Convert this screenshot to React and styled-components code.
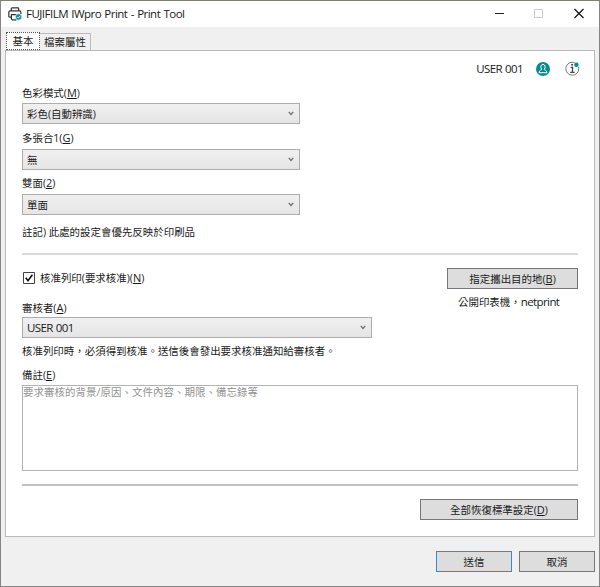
import React from 'react';
import styled, { createGlobalStyle } from 'styled-components';

function Combo({ value, width }) {
  return (
    <Select $width={width}>
      <Text>{value}</Text>
      <Chevron viewBox="0 0 6 5">
        <path d="M0.8 0.8 L3 3.6 L5.2 0.8" />
      </Chevron>
    </Select>
  );
}

function App() {
  return (
    <Window>
      <GlobalStyle />
      <TitleBar>
        <PrinterIcon viewBox="0 0 14 14">
          <path d="M3.3 4V1.7q0-.8.8-.8h5.8q.8 0 .8.8V4M3 10.2H1.8q-1 0-1-1V5.3q0-1.4 1.4-1.4h9.3q1.4 0 1.4 1.4V7M3.4 12V7.6h6M3.4 11.6q0 1.2 1 1.2h4" />
          <circle cx="10.6" cy="9.9" r="3.2" />
          <path className="check" d="M9.1 9.9l1.1 1.1 2-2.1" />
        </PrinterIcon>
        <Title>FUJIFILM IWpro Print - Print Tool</Title>
        <WindowIcons viewBox="0 0 90 12">
          <path d="M0 5.5h9" stroke="#222" />
          <path d="M39.5 1.5h8v8h-8z" stroke="#ccc" />
          <path d="M79.5 1l9 9M88.5 1l-9 9" stroke="#111" strokeWidth="1.2" />
        </WindowIcons>
      </TitleBar>

      <Tabs>
        <Tab $active><Text>基本</Text></Tab>
        <Tab><Text>檔案屬性</Text></Tab>
      </Tabs>

      <Panel>
        <UserRow>
          <Latin>USER 001</Latin>
          <UserIcon viewBox="0 0 14 14">
            <circle cx="7" cy="7" r="7" fill="#088a92" />
            <path d="M5.7 7.3C4.2 5.6 4.7 2.4 7 2.4s2.8 3.2 1.3 4.9c.2 1 2.6.8 2.7 3.4H3c.1-2.6 2.5-2.4 2.7-3.4z" fill="none" stroke="#fff" />
          </UserIcon>
          <InfoIcon viewBox="0 0 15 15">
            <circle cx="7.3" cy="7.7" r="6.5" fill="none" stroke="#777" />
            <path d="M5.6 6.3h1.9v5M5.2 11.3h4.4" fill="none" stroke="#444" strokeWidth="1.3" />
            <circle cx="7.1" cy="3.7" r="1" fill="#444" />
            <circle cx="11.4" cy="3.7" r="2.8" fill="#fff" />
            <circle cx="11.4" cy="3.7" r="2.2" fill="#088a92" />
          </InfoIcon>
        </UserRow>

        <Label $h={23} $line={25}>色彩模式(<u>M</u>)</Label>
        <Combo value="彩色(自動辨識)" width={278} />
        <Label $line={27}>多張合1(<u>G</u>)</Label>
        <Combo value="無" width={278} />
        <Label $h={24} $line={26}>雙面(<u>2</u>)</Label>
        <Combo value="單面" width={278} />
        <Label $h={38} $line={35}>註記) 此處的設定會優先反映於印刷品</Label>
        <Divider $color="#d8d8d8" />

        <ApproveRow>
          <CheckLabel>
            <CheckBox viewBox="0 0 12 12">
              <path d="M.5.5h11v11H.5z" fill="#fff" stroke="#444" />
              <path d="M2.7 5.8l2.3 2.9 4.4-6" fill="none" stroke="#111" strokeWidth="1.6" />
            </CheckBox>
            <Text>核准列印(要求核准)(<u>N</u>)</Text>
          </CheckLabel>
          <Destination>
            <Button $width={131}>指定攜出目的地(<u>B</u>)</Button>
            <DestinationNote>公開印表機，<Latin>netprint</Latin></DestinationNote>
          </Destination>
        </ApproveRow>

        <Label $h={19} $line={19}>審核者(<u>A</u>)</Label>
        <Combo value={<Latin>USER 001</Latin>} width={350} />
        <Label $h={25} $line={27}>核准列印時，必須得到核准。送信後會發出要求核准通知給審核者。</Label>
        <Label $h={22} $line={24}>備註(<u>E</u>)</Label>
        <Memo placeholder="要求審核的背景/原因、文件內容、期限、備忘錄等" />
        <Divider $color="#c0c0c0" $top={13} />
        <ResetRow>
          <Button $width={158}>全部恢復標準設定(<u>D</u>)</Button>
        </ResetRow>
      </Panel>

      <Footer>
        <Button $width={76} $primary>送信</Button>
        <Button $width={76}>取消</Button>
      </Footer>
    </Window>
  );
}

export default App;


const GlobalStyle = createGlobalStyle`
  * {
    box-sizing: border-box;
  }

  body {
    margin: 0;
    font-family: "Open Sans", "Noto Sans CJK TC", sans-serif;
    font-size: 10.46px;
    color: #1a1a1a;
  }

  u {
    font-size: 11px;
    text-underline-offset: 1px;
  }
`;

const Window = styled.div`
  display: flex;
  flex-direction: column;
  width: 600px;
  height: 587px;
  border: 1px solid #858585;
  border-top-color: #807e70;
  background: #f0f0f0;
  overflow: hidden;
`;

const TitleBar = styled.header`
  display: flex;
  align-items: center;
  flex: none;
  height: 26px;
  padding: 0 14px 0 7px;
  background: #fff;
`;

const PrinterIcon = styled.svg`
  width: 14px;
  height: 14px;
  fill: none;
  stroke: #333;
  stroke-width: 1.2;

  circle {
    fill: #12929c;
    stroke: #fff;
    stroke-width: 0.6;
  }

  .check {
    stroke: #fff;
    stroke-width: 0.9;
  }
`;

const Title = styled.span`
  margin-left: 4px;
  font-size: 11.5px;
  letter-spacing: -0.52px;
  word-spacing: 0.8px;
  line-height: 16px;
  white-space: nowrap;
`;

const WindowIcons = styled.svg` //minimize, maximize, close
  width: 90px;
  height: 12px;
  margin-left: auto;
  fill: none;
`;

const Tabs = styled.nav`
  display: flex;
  align-items: flex-end;
  flex: none;
  height: 23px;
  padding-left: 5px;
`;

const Tab = styled.div`
  display: flex;
  align-items: center;
  justify-content: center;
  width: ${(p) => (p.$active ? 34 : 51)}px;
  height: ${(p) => (p.$active ? 18 : 17)}px;
  border: 1px ${(p) => (p.$active ? 'dotted #555' : 'solid #bbb')};
  border-left-width: ${(p) => (p.$active ? 1 : 0)}px;
  border-bottom-width: ${(p) => (p.$active ? 1 : 0)}px;
  background: ${(p) => (p.$active ? '#fff' : '#f0f0f0')};
`;

const Text = styled.span`
  line-height: 16px;
  white-space: nowrap;
`;

const Latin = styled.span`
  font-size: 11.5px;
  letter-spacing: -0.6px;
  word-spacing: 0.7px;
  line-height: 14px;
`;

const Panel = styled.main`
  flex: none;
  width: 590px;
  height: 487px;
  margin-left: 4px;
  padding: 0 16px;
  border: 1px solid #b9b9b9;
  background: #fff;
`;

const UserRow = styled.div`
  display: flex;
  align-items: center;
  justify-content: flex-end;
  height: 29px;
  padding-top: 6px;
`;

const UserIcon = styled.svg`
  width: 14px;
  height: 14px;
  margin-left: 13px;
`;

const InfoIcon = styled.svg`
  width: 15px;
  height: 15px;
  margin: 0 -2px 0 15px;
`;

const Label = styled.div`
  height: ${(p) => p.$h || 25}px;
  line-height: ${(p) => p.$line}px;
  white-space: nowrap;
`;

const Select = styled.div`
  display: flex;
  align-items: center;
  justify-content: space-between;
  width: ${(p) => p.$width}px;
  height: 21px;
  padding: 0 5px 0 4px;
  border: 1px solid #adadad;
  background: linear-gradient(#f0f0f0, #e5e5e5);
`;

const Chevron = styled.svg`
  width: 6px;
  height: 5px;
  fill: none;
  stroke: #666;
  stroke-width: 1.2;
`;

const Divider = styled.div`
  height: 2px;
  margin-top: ${(p) => p.$top || 0}px;
  background: ${(p) => p.$color};
`;

const ApproveRow = styled.div`
  display: flex;
  justify-content: space-between;
  height: 43px;
  padding-top: 13px;
`;

const CheckLabel = styled.div`
  display: flex;
  align-items: center;
  height: 20px;
  gap: 5px;
  padding-left: 1px;
`;

const CheckBox = styled.svg`
  width: 12px;
  height: 12px;
`;

const Destination = styled.div`
  width: 131px;
`;

const DestinationNote = styled.div`
  margin-top: 5px;
  padding-left: 11px;
  line-height: 16px;
  white-space: nowrap;
`;

const Button = styled.button`
  display: block;
  width: ${(p) => p.$width}px;
  height: 21px;
  padding: 0;
  border: 1px solid ${(p) => (p.$primary ? '#3c88c8' : '#777')};
  background: #ddd;
  color: #1a1a1a;
  font: inherit;
  line-height: 16px;
  white-space: nowrap;
`;

const Memo = styled.textarea`
  display: block;
  width: 556px;
  height: 86px;
  padding: 0;
  border: 1px solid #b2b2b8;
  background: #fff;
  font: inherit;
  letter-spacing: 0.05px;
  line-height: 13px;
  resize: none;
  outline: none;

  &::placeholder {
    color: #929292;
  }
`;

const ResetRow = styled.div`
  display: flex;
  justify-content: flex-end;
  padding-top: 13px;
`;

const Footer = styled.footer`
  display: flex;
  justify-content: flex-end;
  gap: 7px;
  padding: 14px 4px 0 0;
`;
